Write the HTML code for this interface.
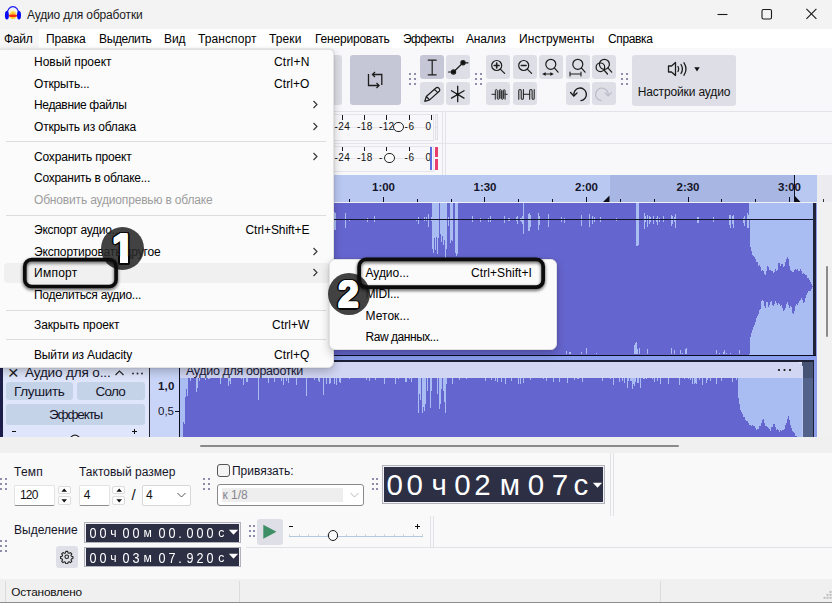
<!DOCTYPE html>
<html lang="ru"><head><meta charset="utf-8"><title>Аудио для обработки</title>
<style>
html,body{margin:0;padding:0}
body{width:832px;height:603px;overflow:hidden;position:relative;background:#f0f0f0;font-family:"Liberation Sans",sans-serif;}
.abs{position:absolute;display:block}
.t{position:absolute;white-space:nowrap;display:block}
.menu{background:#fbfbfb;border:1px solid #e2e2e2;box-sizing:border-box;box-shadow:0 4px 10px rgba(0,0,0,.22),0 0 2px rgba(0,0,0,.15)}
.numo{color:#0a0a0a;font-weight:bold;text-shadow:2.50px 0.00px 0 #0a0a0a,2.31px 0.96px 0 #0a0a0a,1.77px 1.77px 0 #0a0a0a,0.96px 2.31px 0 #0a0a0a,0.00px 2.50px 0 #0a0a0a,-0.96px 2.31px 0 #0a0a0a,-1.77px 1.77px 0 #0a0a0a,-2.31px 0.96px 0 #0a0a0a,-2.50px 0.00px 0 #0a0a0a,-2.31px -0.96px 0 #0a0a0a,-1.77px -1.77px 0 #0a0a0a,-0.96px -2.31px 0 #0a0a0a,-0.00px -2.50px 0 #0a0a0a,0.96px -2.31px 0 #0a0a0a,1.77px -1.77px 0 #0a0a0a,2.31px -0.96px 0 #0a0a0a,1.50px 0.00px 0 #0a0a0a,1.21px 0.88px 0 #0a0a0a,0.46px 1.43px 0 #0a0a0a,-0.46px 1.43px 0 #0a0a0a,-1.21px 0.88px 0 #0a0a0a,-1.50px 0.00px 0 #0a0a0a,-1.21px -0.88px 0 #0a0a0a,-0.46px -1.43px 0 #0a0a0a,0.46px -1.43px 0 #0a0a0a,1.21px -0.88px 0 #0a0a0a;}
.num{color:#fff;font-weight:bold;text-shadow:0.90px 0.00px 0 #fff,0.73px 0.53px 0 #fff,0.28px 0.86px 0 #fff,-0.28px 0.86px 0 #fff,-0.73px 0.53px 0 #fff,-0.90px 0.00px 0 #fff,-0.73px -0.53px 0 #fff,-0.28px -0.86px 0 #fff,0.28px -0.86px 0 #fff,0.73px -0.53px 0 #fff;}
</style></head><body>
<div class="abs" style="left:0px;top:0px;width:832px;height:29px;background:#f3f3f3;"></div>
<svg class="abs" style="left:0px;top:0px" width="26" height="26" viewBox="0 0 26 26">
 <defs><radialGradient id="ag" cx="50%" cy="55%" r="55%"><stop offset="0" stop-color="#ffb020"/><stop offset=".6" stop-color="#ffd23a"/><stop offset="1" stop-color="#fff0a8"/></radialGradient></defs>
 <path d="M7.300 13.500A5.650 6.900 0 0 1 18.600 13.500" fill="none" stroke="#1c1cf2" stroke-width="1.200"/>
 <ellipse cx="6.900" cy="15.200" rx="2" ry="4.300" fill="#0a0af5"/>
 <ellipse cx="19" cy="15.200" rx="2" ry="4.300" fill="#0a0af5"/>
 <ellipse cx="12.950" cy="14.900" rx="3.800" ry="4.400" fill="url(#ag)"/>
 <ellipse cx="12.950" cy="15.700" rx="4.300" ry="1.250" fill="#ff2a12"/>
</svg>
<span class="t" style="left:27.00px;top:6.50px;line-height:16px;font-size:12px;color:#1b1b1b;letter-spacing:-0.165px;">Аудио для обработки</span>
<svg class="abs" style="left:700px;top:0" width="132" height="29" viewBox="0 0 132 29" fill="none" stroke="#1a1a1a" stroke-width="1.100">
 <path d="M17.500 14.500h10"/>
 <rect x="62" y="9.500" width="9.500" height="9.500" rx="1.500"/>
 <path d="M106.400 8.900l10 10M116.400 8.900l-10 10"/>
</svg>
<div class="abs" style="left:0px;top:29px;width:832px;height:18.5px;background:#ffffff;"></div>
<div class="abs" style="left:0px;top:29px;width:38.5px;height:18.5px;background:#f6f6f6;"></div>
<span class="t" style="left:4.00px;top:30.50px;line-height:16px;font-size:12px;color:#000;letter-spacing:-0.250px;">Файл</span>
<span class="t" style="left:46.00px;top:30.50px;line-height:16px;font-size:12px;color:#000;letter-spacing:-0.172px;">Правка</span>
<span class="t" style="left:99.00px;top:30.50px;line-height:16px;font-size:12px;color:#000;letter-spacing:-0.357px;">Выделить</span>
<span class="t" style="left:164.00px;top:30.50px;line-height:16px;font-size:12px;color:#000;letter-spacing:-0.070px;">Вид</span>
<span class="t" style="left:198.00px;top:30.50px;line-height:16px;font-size:12px;color:#000;letter-spacing:0.088px;">Транспорт</span>
<span class="t" style="left:269.00px;top:30.50px;line-height:16px;font-size:12px;color:#000;letter-spacing:0.109px;">Треки</span>
<span class="t" style="left:315.00px;top:30.50px;line-height:16px;font-size:12px;color:#000;letter-spacing:-0.191px;">Генерировать</span>
<span class="t" style="left:403.00px;top:30.50px;line-height:16px;font-size:12px;color:#000;letter-spacing:-0.579px;">Эффекты</span>
<span class="t" style="left:466.00px;top:30.50px;line-height:16px;font-size:12px;color:#000;letter-spacing:-0.168px;">Анализ</span>
<span class="t" style="left:519.00px;top:30.50px;line-height:16px;font-size:12px;color:#000;letter-spacing:0.062px;">Инструменты</span>
<span class="t" style="left:608.00px;top:30.50px;line-height:16px;font-size:12px;color:#000;letter-spacing:-0.368px;">Справка</span>
<div class="abs" style="left:0px;top:47.5px;width:832px;height:64px;background:#f8f8fa;"></div>
<div class="abs" style="left:0px;top:111px;width:832px;height:1px;background:#e3e3e8;"></div>
<div class="abs" style="left:334px;top:55px;width:8px;height:50px;background:#dddde6;border-radius:0 3px 3px 0;"></div>
<div class="abs" style="left:350px;top:55px;width:50.5px;height:50px;background:#c6c7d6;border-radius:3px;"></div>
<svg class="abs" style="left:366px;top:70px" width="20" height="20" viewBox="0 0 20 20" fill="none" stroke="#1c1c1c" stroke-width="1.300">
 <path d="M2.500 4V15.500H13"/><path d="M10.500 13L13 15.500L10.500 18"/>
 <path d="M6.500 4.500H15.800V15"/><path d="M9 2L6.500 4.500L9 7"/>
</svg>
<div class="abs" style="left:408.6px;top:73.2px;width:2px;height:2px;background:#8e8eac;box-shadow:0 0 1px rgba(255,255,255,.9);"></div><div class="abs" style="left:413.5px;top:73.2px;width:2px;height:2px;background:#8e8eac;box-shadow:0 0 1px rgba(255,255,255,.9);"></div><div class="abs" style="left:408.6px;top:78.10000000000001px;width:2px;height:2px;background:#8e8eac;box-shadow:0 0 1px rgba(255,255,255,.9);"></div><div class="abs" style="left:413.5px;top:78.10000000000001px;width:2px;height:2px;background:#8e8eac;box-shadow:0 0 1px rgba(255,255,255,.9);"></div><div class="abs" style="left:408.6px;top:83.0px;width:2px;height:2px;background:#8e8eac;box-shadow:0 0 1px rgba(255,255,255,.9);"></div><div class="abs" style="left:413.5px;top:83.0px;width:2px;height:2px;background:#8e8eac;box-shadow:0 0 1px rgba(255,255,255,.9);"></div>
<div class="abs" style="left:475.1px;top:73.2px;width:2px;height:2px;background:#8e8eac;box-shadow:0 0 1px rgba(255,255,255,.9);"></div><div class="abs" style="left:480.0px;top:73.2px;width:2px;height:2px;background:#8e8eac;box-shadow:0 0 1px rgba(255,255,255,.9);"></div><div class="abs" style="left:475.1px;top:78.10000000000001px;width:2px;height:2px;background:#8e8eac;box-shadow:0 0 1px rgba(255,255,255,.9);"></div><div class="abs" style="left:480.0px;top:78.10000000000001px;width:2px;height:2px;background:#8e8eac;box-shadow:0 0 1px rgba(255,255,255,.9);"></div><div class="abs" style="left:475.1px;top:83.0px;width:2px;height:2px;background:#8e8eac;box-shadow:0 0 1px rgba(255,255,255,.9);"></div><div class="abs" style="left:480.0px;top:83.0px;width:2px;height:2px;background:#8e8eac;box-shadow:0 0 1px rgba(255,255,255,.9);"></div>
<div class="abs" style="left:621.1px;top:73.2px;width:2px;height:2px;background:#8e8eac;box-shadow:0 0 1px rgba(255,255,255,.9);"></div><div class="abs" style="left:626.0px;top:73.2px;width:2px;height:2px;background:#8e8eac;box-shadow:0 0 1px rgba(255,255,255,.9);"></div><div class="abs" style="left:621.1px;top:78.10000000000001px;width:2px;height:2px;background:#8e8eac;box-shadow:0 0 1px rgba(255,255,255,.9);"></div><div class="abs" style="left:626.0px;top:78.10000000000001px;width:2px;height:2px;background:#8e8eac;box-shadow:0 0 1px rgba(255,255,255,.9);"></div><div class="abs" style="left:621.1px;top:83.0px;width:2px;height:2px;background:#8e8eac;box-shadow:0 0 1px rgba(255,255,255,.9);"></div><div class="abs" style="left:626.0px;top:83.0px;width:2px;height:2px;background:#8e8eac;box-shadow:0 0 1px rgba(255,255,255,.9);"></div>
<div class="abs" style="left:419.5px;top:55px;width:24px;height:23.5px;background:#c6c7d6;border-radius:3px;"></div>
<div class="abs" style="left:446px;top:55px;width:24px;height:23.5px;background:#dedee7;border-radius:3px;"></div>
<div class="abs" style="left:419.5px;top:81.5px;width:24px;height:23.5px;background:#dedee7;border-radius:3px;"></div>
<div class="abs" style="left:446px;top:81.5px;width:24px;height:23.5px;background:#dedee7;border-radius:3px;"></div>
<div class="abs" style="left:486px;top:55px;width:24px;height:23.5px;background:#dedee7;border-radius:3px;"></div>
<div class="abs" style="left:512.5px;top:55px;width:24px;height:23.5px;background:#dedee7;border-radius:3px;"></div>
<div class="abs" style="left:539px;top:55px;width:24px;height:23.5px;background:#dedee7;border-radius:3px;"></div>
<div class="abs" style="left:565.5px;top:55px;width:24px;height:23.5px;background:#dedee7;border-radius:3px;"></div>
<div class="abs" style="left:592px;top:55px;width:24px;height:23.5px;background:#dedee7;border-radius:3px;"></div>
<div class="abs" style="left:486px;top:81.5px;width:24px;height:23.5px;background:#dedee7;border-radius:3px;"></div>
<div class="abs" style="left:512.5px;top:81.5px;width:24px;height:23.5px;background:#dedee7;border-radius:3px;"></div>
<div class="abs" style="left:565.5px;top:81.5px;width:24px;height:23.5px;background:#dedee7;border-radius:3px;"></div>
<div class="abs" style="left:592px;top:81.5px;width:24px;height:23.5px;background:#dedee7;border-radius:3px;"></div>
<div class="abs" style="left:632px;top:55px;width:104px;height:50.5px;background:#dedee7;border-radius:3px;"></div>
<svg class="abs" style="left:419.5px;top:55px" width="24" height="23.500" viewBox="0 0 24 23.500" fill="none" stroke="#1c1c1c" stroke-width="1.2" stroke-linecap="round" stroke-linejoin="round"><path d="M8.200 5.200h8M8.200 19.800h8M12.200 5.200V19.800"/></svg>
<svg class="abs" style="left:446px;top:55px" width="24" height="23.500" viewBox="0 0 24 23.500" fill="none" stroke="#1c1c1c" stroke-width="1.2" stroke-linecap="round" stroke-linejoin="round"><path d="M2.500 17H7.500L17 7.800H22"/><circle cx="7.500" cy="17" r="2.100" fill="#111"/><circle cx="17" cy="7.800" r="2.100" fill="#111"/></svg>
<svg class="abs" style="left:419.5px;top:81.5px" width="24" height="23.500" viewBox="0 0 24 23.500" fill="none" stroke="#1c1c1c" stroke-width="1.2" stroke-linecap="round" stroke-linejoin="round"><path d="M4.800 19.300l1.500-4.800L15.900 6a1.900 1.900 0 0 1 2.700 0l.6.600a1.900 1.900 0 0 1 0 2.700L9.600 17.900z M14.500 7.400l3.300 3.300M6.300 14.500l3.300 3.400"/></svg>
<svg class="abs" style="left:446px;top:81.5px" width="24" height="23.500" viewBox="0 0 24 23.500" fill="none" stroke="#1c1c1c" stroke-width="1.3" stroke-linecap="round" stroke-linejoin="round"><path d="M11.700 4.200v15.500M5.500 8.700l12.500 7.400M18 8.700l-12.500 7.400"/><circle cx="11.700" cy="12.400" r="1.300" fill="#111" stroke="none"/></svg>
<svg class="abs" style="left:486px;top:55px" width="24" height="23.500" viewBox="0 0 24 23.500" fill="none" stroke="#1c1c1c" stroke-width="1.2" stroke-linecap="round" stroke-linejoin="round"><circle cx="10.700" cy="10.500" r="5"/><path d="M14.300 14.100l4.300 4.300"/><path d="M8.300 10.500h4.800M10.700 8.100v4.800" stroke-width="1.600"/></svg>
<svg class="abs" style="left:512.5px;top:55px" width="24" height="23.500" viewBox="0 0 24 23.500" fill="none" stroke="#1c1c1c" stroke-width="1.2" stroke-linecap="round" stroke-linejoin="round"><circle cx="10.700" cy="10.500" r="5"/><path d="M14.300 14.100l4.300 4.300"/><path d="M8.300 10.500h4.800" stroke-width="1.600"/></svg>
<svg class="abs" style="left:539px;top:55px" width="24" height="23.500" viewBox="0 0 24 23.500" fill="none" stroke="#1c1c1c" stroke-width="1.2" stroke-linecap="round" stroke-linejoin="round"><circle cx="11.800" cy="9.300" r="5"/><path d="M15.300 12.900l3.800 4.300"/><path d="M4 19h10" stroke-width="1"/><path d="M4 19l2.600-1.900v3.800zM14 19l-2.600-1.900v3.800z" fill="#111" stroke="none"/></svg>
<svg class="abs" style="left:565.5px;top:55px" width="24" height="23.500" viewBox="0 0 24 23.500" fill="none" stroke="#1c1c1c" stroke-width="1.2" stroke-linecap="round" stroke-linejoin="round"><circle cx="11.800" cy="9.300" r="5"/><path d="M15.300 12.900l3.800 4.300"/><path d="M4 19h11M4 17v4M15 17v4" stroke-width="1.100"/></svg>
<svg class="abs" style="left:592px;top:55px" width="24" height="23.500" viewBox="0 0 24 23.500" fill="none" stroke="#1c1c1c" stroke-width="1.2" stroke-linecap="round" stroke-linejoin="round"><circle cx="12.400" cy="9.300" r="5"/><circle cx="8.400" cy="12.300" r="4.300"/><path d="M15.900 12.900l3.800 4.300M12 15l3.500 4"/></svg>
<svg class="abs" style="left:486px;top:81.5px" width="24" height="23.500" viewBox="0 0 24 23.500" fill="none" stroke="#1c1c1c" stroke-width="0.95" stroke-linecap="round" stroke-linejoin="round"><rect x="12.500" y="8.500" width="6" height="8" fill="#8a8a92" stroke="none"/><path d="M5.900 12.300h3.400M19.100 12.300h2.100"/><path d="M9.300 17.300V8.600a1 1 0 0 1 2 0V16.300a1 1 0 0 0 2 0V8.600a1 1 0 0 1 2 0V16.300a1 1 0 0 0 2 0V8.600a.9 .9 0 0 1 1.800 0V17.300"/></svg>
<svg class="abs" style="left:512.5px;top:81.5px" width="24" height="23.500" viewBox="0 0 24 23.500" fill="none" stroke="#1c1c1c" stroke-width="1.05" stroke-linecap="round" stroke-linejoin="round"><path d="M10.400 12.300h6.300"/><path d="M5.800 17.300V8.700a1.200 1.200 0 0 1 2.400 0V16.200a1.100 1.100 0 0 0 2.200 0V7.600M16.700 17.300V8.700a1.200 1.200 0 0 1 2.400 0V16.200a1.050 1.050 0 0 0 2.100 0V7.600"/></svg>
<svg class="abs" style="left:565.5px;top:81.5px" width="24" height="23.500" viewBox="0 0 24 23.500" fill="none" stroke="#1c1c1c" stroke-width="1.4" stroke-linecap="round" stroke-linejoin="round"><path d="M7.900 13.600A6.300 6.300 0 1 1 15 18.600"/><path d="M4.600 10.600l3.200 3.300 3.200-3"/></svg>
<svg class="abs" style="left:592px;top:81.5px" width="24" height="23.500" viewBox="0 0 24 23.500" fill="none" stroke="#b6b9c4" stroke-width="1.1" stroke-linecap="round" stroke-linejoin="round"><path d="M16.100 13.600A6.300 6.300 0 1 0 9 18.600"/><path d="M19.400 10.600l-3.200 3.300-3.200-3"/></svg>
<svg class="abs" style="left:664px;top:58px" width="40" height="22" viewBox="0 0 40 22" fill="none" stroke="#1c1c1c" stroke-width="1.300" stroke-linejoin="round" stroke-linecap="round">
 <path d="M4.500 8h3l4-3.500v13l-4-3.500h-3z"/><path d="M14 8.500q1.500 2.500 0 5M17 6.500q2.800 4.500 0 9M20 4.800q4 6.200 0 12.400" />
 <path d="M30.300 9.200h5.400l-2.700 4.200z" fill="#111" stroke="none"/>
</svg>
<span class="t" style="left:637.70px;top:83.50px;line-height:16px;font-size:12px;color:#111;letter-spacing:-0.139px;">Настройки аудио</span>
<div class="abs" style="left:0px;top:112px;width:832px;height:63px;background:#f8f8fa;"></div>
<div class="abs" style="left:334px;top:142.5px;width:498px;height:1px;background:#e4e4ea;"></div>
<div class="abs" style="left:442px;top:112px;width:1px;height:63px;background:#e2e2e8;"></div>
<div class="abs" style="left:445px;top:112px;width:1px;height:63px;background:#e2e2e8;"></div>
<div class="abs" style="left:334px;top:114px;width:100px;height:1px;background:#e4e4ea;"></div>
<div class="abs" style="left:334px;top:139.7px;width:100px;height:1px;background:#e4e4ea;"></div>
<div class="abs" style="left:433.3px;top:114px;width:1px;height:25.69999999999999px;background:#e4e4ea;"></div>
<div class="abs" style="left:334px;top:126.64999999999999px;width:96px;height:1px;background:#e6e6ec;"></div>
<div class="abs" style="left:342px;top:115px;width:1px;height:4.6px;background:#1a1a1a;"></div>
<div class="abs" style="left:364px;top:115px;width:1px;height:4.6px;background:#1a1a1a;"></div>
<div class="abs" style="left:386px;top:115px;width:1px;height:4.6px;background:#1a1a1a;"></div>
<div class="abs" style="left:409px;top:115px;width:1px;height:4.6px;background:#1a1a1a;"></div>
<div class="abs" style="left:431px;top:115px;width:1px;height:4.6px;background:#1a1a1a;"></div>
<span class="t" style="left:334.60px;top:120.05px;line-height:13px;font-size:10px;color:#111;letter-spacing:0.416px;">-24</span>
<span class="t" style="left:357.00px;top:120.05px;line-height:13px;font-size:10px;color:#111;letter-spacing:0.383px;">-18</span>
<span class="t" style="left:379.00px;top:120.05px;line-height:13px;font-size:10px;color:#111;letter-spacing:0.349px;">-12</span>
<span class="t" style="left:404.50px;top:120.05px;line-height:13px;font-size:10px;color:#111;letter-spacing:0.555px;">-6</span>
<span class="t" style="left:425.50px;top:120.05px;line-height:13px;font-size:10px;color:#111;letter-spacing:0.439px;">0</span>
<div class="abs" style="left:393.2px;top:121.64999999999999px;width:8.400px;height:8.400px;border:1.300px solid #222;border-radius:50%;background:#fafafa"></div>
<div class="abs" style="left:334px;top:145.5px;width:100px;height:1px;background:#e4e4ea;"></div>
<div class="abs" style="left:334px;top:170.5px;width:100px;height:1px;background:#e4e4ea;"></div>
<div class="abs" style="left:433.3px;top:145.5px;width:1px;height:25.0px;background:#e4e4ea;"></div>
<div class="abs" style="left:334px;top:157.8px;width:96px;height:1px;background:#e6e6ec;"></div>
<div class="abs" style="left:342px;top:146.5px;width:1px;height:4.6px;background:#1a1a1a;"></div>
<div class="abs" style="left:364px;top:146.5px;width:1px;height:4.6px;background:#1a1a1a;"></div>
<div class="abs" style="left:386px;top:146.5px;width:1px;height:4.6px;background:#1a1a1a;"></div>
<div class="abs" style="left:409px;top:146.5px;width:1px;height:4.6px;background:#1a1a1a;"></div>
<div class="abs" style="left:431px;top:146.5px;width:1px;height:4.6px;background:#1a1a1a;"></div>
<span class="t" style="left:334.60px;top:151.20px;line-height:13px;font-size:10px;color:#111;letter-spacing:0.416px;">-24</span>
<span class="t" style="left:357.00px;top:151.20px;line-height:13px;font-size:10px;color:#111;letter-spacing:0.383px;">-18</span>
<span class="t" style="left:379.00px;top:151.20px;line-height:13px;font-size:10px;color:#111;letter-spacing:1.170px;">-</span>
<span class="t" style="left:404.50px;top:151.20px;line-height:13px;font-size:10px;color:#111;letter-spacing:0.555px;">-6</span>
<span class="t" style="left:425.50px;top:151.20px;line-height:13px;font-size:10px;color:#111;letter-spacing:0.439px;">0</span>
<div class="abs" style="left:384.3px;top:152.8px;width:8.400px;height:8.400px;border:1.300px solid #222;border-radius:50%;background:#fafafa"></div>
<div class="abs" style="left:434.6px;top:114.3px;width:3.8px;height:25.6px;background:#f4f4f7;border:1px solid #e0e0e6;box-sizing:border-box;"></div>
<div class="abs" style="left:434.6px;top:126.8px;width:3.8px;height:1px;background:#e0e0e6;"></div>
<div class="abs" style="left:430.4px;top:146.7px;width:1.9px;height:23.3px;background:#5a6ee0;"></div>
<div class="abs" style="left:434.9px;top:146.7px;width:3.3px;height:10.6px;background:#e8406a;"></div>
<div class="abs" style="left:434.9px;top:158.8px;width:3.3px;height:11.2px;background:#e8406a;"></div>
<div class="abs" style="left:0px;top:174.5px;width:334px;height:28.5px;background:#e9e9ee;"></div>
<div class="abs" style="left:334px;top:174.5px;width:483px;height:28.5px;background:#b9c8f1;"></div>
<div class="abs" style="left:609.5px;top:174.5px;width:185px;height:28.5px;background:#a7b6e2;"></div>
<div class="abs" style="left:817px;top:174.5px;width:15px;height:28.5px;background:#ebebf0;"></div>
<div class="abs" style="left:334px;top:201.7px;width:483px;height:1.4px;background:#101020;"></div>
<div class="abs" style="left:349px;top:198.7px;width:1px;height:3.5px;background:#101020;"></div>
<div class="abs" style="left:383px;top:196.7px;width:1px;height:5.5px;background:#101020;"></div>
<div class="abs" style="left:417px;top:198.7px;width:1px;height:3.5px;background:#101020;"></div>
<div class="abs" style="left:451px;top:198.7px;width:1px;height:3.5px;background:#101020;"></div>
<div class="abs" style="left:484px;top:196.7px;width:1px;height:5.5px;background:#101020;"></div>
<div class="abs" style="left:518px;top:198.7px;width:1px;height:3.5px;background:#101020;"></div>
<div class="abs" style="left:552px;top:198.7px;width:1px;height:3.5px;background:#101020;"></div>
<div class="abs" style="left:586px;top:196.7px;width:1px;height:5.5px;background:#101020;"></div>
<div class="abs" style="left:620px;top:198.7px;width:1px;height:3.5px;background:#101020;"></div>
<div class="abs" style="left:654px;top:198.7px;width:1px;height:3.5px;background:#101020;"></div>
<div class="abs" style="left:688px;top:196.7px;width:1px;height:5.5px;background:#101020;"></div>
<div class="abs" style="left:721px;top:198.7px;width:1px;height:3.5px;background:#101020;"></div>
<div class="abs" style="left:755px;top:198.7px;width:1px;height:3.5px;background:#101020;"></div>
<div class="abs" style="left:789px;top:196.7px;width:1px;height:5.5px;background:#101020;"></div>
<span class="t" style="left:372.00px;top:180.00px;line-height:15px;font-size:11.5px;color:#15152a;font-weight:bold;letter-spacing:-0.004px;">1:00</span>
<span class="t" style="left:473.50px;top:180.00px;line-height:15px;font-size:11.5px;color:#15152a;font-weight:bold;letter-spacing:-0.004px;">1:30</span>
<span class="t" style="left:575.00px;top:180.00px;line-height:15px;font-size:11.5px;color:#15152a;font-weight:bold;letter-spacing:-0.004px;">2:00</span>
<span class="t" style="left:676.50px;top:180.00px;line-height:15px;font-size:11.5px;color:#15152a;font-weight:bold;letter-spacing:-0.004px;">2:30</span>
<span class="t" style="left:778.00px;top:180.00px;line-height:15px;font-size:11.5px;color:#15152a;font-weight:bold;letter-spacing:-0.004px;">3:00</span>
<div class="abs" style="left:794px;top:175px;width:1.2px;height:27px;background:#101020;"></div>
<svg class="abs" style="left:600px;top:194px" width="210" height="8" viewBox="0 0 210 8"><path d="M9.500 1.500v6.500h-6.500zM194.500 1.500v6.500h6z" fill="#0c0c18"/></svg>
<div class="abs" style="left:823.3px;top:199px;width:1px;height:3.5px;background:#333;"></div>
<div class="abs" style="left:0px;top:202px;width:832px;height:235px;background:#f0f0f3;"></div>
<div class="abs" style="left:817px;top:202px;width:15px;height:251px;background:#f1f1f1;"></div>
<div class="abs" style="left:825.5px;top:266px;width:2.2px;height:71px;background:#8b8b8b;border-radius:1px;"></div>

<svg class="abs" style="left:0;top:0" width="832" height="603" viewBox="0 0 832 603" shape-rendering="crispEdges">
 <!-- track1 -->
 <rect x="334" y="203" width="415" height="151.500" fill="#6565cf"/>
 <rect x="749" y="203" width="63.500" height="151.500" fill="#a9bdf2"/>
 <polygon points="749,219.0 750,219.0 750,247.2 751,247.2 751,251.2 752,251.2 752,254.8 753,254.8 753,256.2 754,256.2 754,257.3 755,257.3 755,258.6 756,258.6 756,261.8 757,261.8 757,262.2 758,262.2 758,265.6 759,265.6 759,265.4 760,265.4 760,266.8 761,266.8 761,271.1 762,271.1 762,270.1 763,270.1 763,270.9 764,270.9 764,273.9 765,273.9 765,274.5 766,274.5 766,271.2 767,271.2 767,266.4 768,266.4 768,267.3 769,267.3 769,270.0 770,270.0 770,269.8 771,269.8 771,270.6 772,270.6 772,271.4 773,271.4 773,273.1 774,273.1 774,271.9 775,271.9 775,268.6 776,268.6 776,270.7 777,270.7 777,269.7 778,269.7 778,262.9 779,262.9 779,263.0 780,263.0 780,265.5 781,265.5 781,263.5 782,263.5 782,263.9 783,263.9 783,266.5 784,266.5 784,265.8 785,265.8 785,261.7 786,261.7 786,258.9 787,258.9 787,257.0 788,257.0 788,259.0 789,259.0 789,266.2 790,266.2 790,269.9 791,269.9 791,271.2 792,271.2 792,272.3 793,272.3 793,272.4 794,272.4 794,270.3 795,270.3 795,269.4 796,269.4 796,270.0 797,270.0 797,269.2 798,269.2 798,270.7 799,270.7 799,270.7 800,270.7 800,268.9 801,268.9 801,271.1 802,271.1 802,273.6 803,273.6 803,273.0 804,273.0 804,273.9 805,273.9 805,275.0 806,275.0 806,275.4 807,275.4 807,277.5 808,277.5 808,278.1 809,278.1 809,279.8 810,279.8 810,282.3 811,282.3 811,283.9 812,283.9 812,285.6 813,285.6 813,287.4 812,287.4 812,289.1 811,289.1 811,290.5 810,290.5 810,290.7 809,290.7 809,291.0 808,291.0 808,292.5 807,292.5 807,294.7 806,294.7 806,297.9 805,297.9 805,302.1 804,302.1 804,303.3 803,303.3 803,300.0 802,300.0 802,298.2 801,298.2 801,299.6 800,299.6 800,300.6 799,300.6 799,303.0 798,303.0 798,305.2 797,305.2 797,304.4 796,304.4 796,306.2 795,306.2 795,311.3 794,311.3 794,314.2 793,314.2 793,312.8 792,312.8 792,307.4 791,307.4 791,306.2 790,306.2 790,307.7 789,307.7 789,304.8 788,304.8 788,302.4 787,302.4 787,303.9 786,303.9 786,307.5 785,307.5 785,310.1 784,310.1 784,311.4 783,311.4 783,308.0 782,308.0 782,304.8 781,304.8 781,306.3 780,306.3 780,304.2 779,304.2 779,303.2 778,303.2 778,305.1 777,305.1 777,302.6 776,302.6 776,301.0 775,301.0 775,303.9 774,303.9 774,306.4 773,306.4 773,304.5 772,304.5 772,301.3 771,301.3 771,301.6 770,301.6 770,305.4 769,305.4 769,306.9 768,306.9 768,302.0 767,302.0 767,302.2 766,302.2 766,307.9 765,307.9 765,306.2 764,306.2 764,301.2 763,301.2 763,299.7 762,299.7 762,300.9 761,300.9 761,308.8 760,308.8 760,310.1 759,310.1 759,313.5 758,313.5 758,316.1 757,316.1 757,318.2 756,318.2 756,322.0 755,322.0 755,325.1 754,325.1 754,327.4 753,327.4 753,329.7 752,329.7 752,332.5 751,332.5 751,336.5 750,336.5 750,354.0 749,354.0" fill="#6565cf"/>
 
 <g fill="#a9bdf2"><rect x="334.0" y="212.3" width="1" height="7.2"/><rect x="334.0" y="219.5" width="1" height="10.9"/><rect x="335.0" y="213.2" width="1" height="6.3"/><rect x="335.0" y="219.5" width="1" height="10.8"/><rect x="345.0" y="213.1" width="1" height="6.4"/><rect x="345.0" y="219.5" width="1" height="8.9"/><rect x="349.0" y="218.5" width="1" height="1.0"/><rect x="349.0" y="219.5" width="1" height="1.8"/><rect x="367.0" y="218.0" width="1" height="1.5"/><rect x="367.0" y="219.5" width="1" height="2.9"/><rect x="374.0" y="216.1" width="1" height="3.4"/><rect x="374.0" y="219.5" width="1" height="2.6"/><rect x="416.0" y="218.7" width="1" height="0.8"/><rect x="416.0" y="219.5" width="1" height="1.2"/><rect x="418.0" y="216.6" width="1" height="2.9"/><rect x="418.0" y="219.5" width="1" height="4.4"/><rect x="424.0" y="216.5" width="1" height="3.0"/><rect x="424.0" y="219.5" width="1" height="1.5"/><rect x="426.0" y="216.9" width="1" height="2.6"/><rect x="426.0" y="219.5" width="1" height="1.7"/><rect x="428.0" y="213.9" width="1" height="5.6"/><rect x="428.0" y="219.5" width="1" height="7.5"/><rect x="431.0" y="216.6" width="1" height="2.9"/><rect x="431.0" y="219.5" width="1" height="1.1"/><rect x="432.0" y="203.0" width="1" height="16.5"/><rect x="432.0" y="219.5" width="1" height="29.9"/><rect x="433.0" y="203.0" width="1" height="16.5"/><rect x="433.0" y="219.5" width="1" height="33.8"/><rect x="434.0" y="203.0" width="1" height="16.5"/><rect x="434.0" y="219.5" width="1" height="18.7"/><rect x="435.0" y="203.0" width="1" height="16.5"/><rect x="435.0" y="219.5" width="1" height="30.4"/><rect x="436.0" y="203.0" width="1" height="16.5"/><rect x="436.0" y="219.5" width="1" height="17.3"/><rect x="437.0" y="203.0" width="1" height="16.5"/><rect x="437.0" y="219.5" width="1" height="34.8"/><rect x="438.0" y="203.0" width="1" height="16.5"/><rect x="438.0" y="219.5" width="1" height="18.4"/><rect x="440.0" y="203.0" width="1" height="16.5"/><rect x="440.0" y="219.5" width="1" height="14.1"/><rect x="441.0" y="203.0" width="1" height="16.5"/><rect x="441.0" y="219.5" width="1" height="22.4"/><rect x="442.0" y="203.0" width="1" height="16.5"/><rect x="442.0" y="219.5" width="1" height="16.3"/><rect x="443.0" y="203.0" width="1" height="16.5"/><rect x="443.0" y="219.5" width="1" height="25.9"/><rect x="444.0" y="203.0" width="1" height="16.5"/><rect x="444.0" y="219.5" width="1" height="20.3"/><rect x="445.0" y="203.0" width="1" height="16.5"/><rect x="445.0" y="219.5" width="1" height="39.3"/><rect x="446.0" y="203.0" width="1" height="16.5"/><rect x="446.0" y="219.5" width="1" height="29.5"/><rect x="448.0" y="216.7" width="1" height="2.8"/><rect x="448.0" y="219.5" width="1" height="6.1"/><rect x="450.0" y="203.0" width="1" height="16.5"/><rect x="450.0" y="219.5" width="1" height="23.6"/><rect x="451.0" y="203.0" width="1" height="16.5"/><rect x="451.0" y="219.5" width="1" height="20.2"/><rect x="452.0" y="203.0" width="1" height="16.5"/><rect x="452.0" y="219.5" width="1" height="21.2"/><rect x="455.0" y="203.0" width="1" height="16.5"/><rect x="455.0" y="219.5" width="1" height="33.0"/><rect x="456.0" y="203.0" width="1" height="16.5"/><rect x="456.0" y="219.5" width="1" height="36.0"/><rect x="457.0" y="203.0" width="1" height="16.5"/><rect x="457.0" y="219.5" width="1" height="34.3"/><rect x="472.0" y="216.1" width="1" height="3.4"/><rect x="472.0" y="219.5" width="1" height="2.1"/><rect x="480.0" y="218.4" width="1" height="1.1"/><rect x="480.0" y="219.5" width="1" height="2.3"/><rect x="488.0" y="217.8" width="1" height="1.7"/><rect x="488.0" y="219.5" width="1" height="2.0"/><rect x="490.0" y="216.0" width="1" height="3.5"/><rect x="490.0" y="219.5" width="1" height="2.7"/><rect x="504.0" y="215.9" width="1" height="3.6"/><rect x="504.0" y="219.5" width="1" height="3.3"/><rect x="508.0" y="217.7" width="1" height="1.8"/><rect x="508.0" y="219.5" width="1" height="1.5"/><rect x="509.0" y="217.7" width="1" height="1.8"/><rect x="509.0" y="219.5" width="1" height="1.7"/><rect x="516.0" y="216.8" width="1" height="2.7"/><rect x="516.0" y="219.5" width="1" height="1.0"/><rect x="517.0" y="216.0" width="1" height="3.5"/><rect x="517.0" y="219.5" width="1" height="4.7"/><rect x="520.0" y="217.7" width="1" height="1.8"/><rect x="520.0" y="219.5" width="1" height="1.4"/><rect x="521.0" y="217.8" width="1" height="1.7"/><rect x="521.0" y="219.5" width="1" height="2.5"/><rect x="522.0" y="216.0" width="1" height="3.5"/><rect x="522.0" y="219.5" width="1" height="4.3"/><rect x="523.0" y="203.0" width="1" height="16.5"/><rect x="523.0" y="219.5" width="1" height="14.5"/><rect x="528.0" y="214.1" width="1" height="5.4"/><rect x="528.0" y="219.5" width="1" height="11.1"/><rect x="529.0" y="212.8" width="1" height="6.7"/><rect x="529.0" y="219.5" width="1" height="11.0"/><rect x="530.0" y="215.4" width="1" height="4.1"/><rect x="530.0" y="219.5" width="1" height="7.2"/><rect x="538.0" y="213.1" width="1" height="6.4"/><rect x="538.0" y="219.5" width="1" height="10.2"/><rect x="539.0" y="215.7" width="1" height="3.8"/><rect x="539.0" y="219.5" width="1" height="5.0"/><rect x="548.0" y="214.0" width="1" height="5.5"/><rect x="548.0" y="219.5" width="1" height="7.7"/><rect x="561.0" y="217.2" width="1" height="2.3"/><rect x="561.0" y="219.5" width="1" height="2.0"/><rect x="564.0" y="217.9" width="1" height="1.6"/><rect x="564.0" y="219.5" width="1" height="3.2"/><rect x="581.0" y="215.0" width="1" height="4.5"/><rect x="581.0" y="219.5" width="1" height="6.5"/><rect x="589.0" y="213.7" width="1" height="5.8"/><rect x="589.0" y="219.5" width="1" height="7.6"/><rect x="592.0" y="216.0" width="1" height="3.5"/><rect x="592.0" y="219.5" width="1" height="4.9"/><rect x="594.0" y="216.9" width="1" height="2.6"/><rect x="594.0" y="219.5" width="1" height="2.9"/><rect x="600.0" y="217.4" width="1" height="2.1"/><rect x="600.0" y="219.5" width="1" height="2.3"/><rect x="616.0" y="218.4" width="1" height="1.1"/><rect x="616.0" y="219.5" width="1" height="1.2"/><rect x="636.0" y="203.0" width="1" height="16.5"/><rect x="636.0" y="219.5" width="1" height="26.4"/><rect x="637.0" y="203.0" width="1" height="16.5"/><rect x="637.0" y="219.5" width="1" height="26.4"/><rect x="638.0" y="203.0" width="1" height="16.5"/><rect x="638.0" y="219.5" width="1" height="25.3"/><rect x="644.0" y="213.2" width="1" height="6.3"/><rect x="644.0" y="219.5" width="1" height="9.0"/><rect x="645.0" y="216.4" width="1" height="3.1"/><rect x="645.0" y="219.5" width="1" height="2.9"/><rect x="647.0" y="215.1" width="1" height="4.4"/><rect x="647.0" y="219.5" width="1" height="7.4"/><rect x="649.0" y="216.0" width="1" height="3.5"/><rect x="649.0" y="219.5" width="1" height="4.0"/><rect x="650.0" y="216.6" width="1" height="2.9"/><rect x="650.0" y="219.5" width="1" height="2.7"/><rect x="653.0" y="215.5" width="1" height="4.0"/><rect x="653.0" y="219.5" width="1" height="4.7"/><rect x="656.0" y="218.3" width="1" height="1.2"/><rect x="656.0" y="219.5" width="1" height="2.2"/><rect x="657.0" y="215.9" width="1" height="3.6"/><rect x="657.0" y="219.5" width="1" height="5.0"/><rect x="659.0" y="217.8" width="1" height="1.7"/><rect x="659.0" y="219.5" width="1" height="2.7"/><rect x="663.0" y="216.2" width="1" height="3.3"/><rect x="663.0" y="219.5" width="1" height="2.1"/><rect x="671.0" y="214.6" width="1" height="4.9"/><rect x="671.0" y="219.5" width="1" height="6.3"/><rect x="672.0" y="215.7" width="1" height="3.8"/><rect x="672.0" y="219.5" width="1" height="4.3"/><rect x="674.0" y="217.1" width="1" height="2.4"/><rect x="674.0" y="219.5" width="1" height="2.6"/><rect x="675.0" y="213.9" width="1" height="5.6"/><rect x="675.0" y="219.5" width="1" height="8.0"/><rect x="697.0" y="216.9" width="1" height="2.6"/><rect x="697.0" y="219.5" width="1" height="3.1"/><rect x="698.0" y="216.5" width="1" height="3.0"/><rect x="698.0" y="219.5" width="1" height="3.2"/><rect x="713.0" y="216.7" width="1" height="2.8"/><rect x="713.0" y="219.5" width="1" height="2.0"/><rect x="729.0" y="215.2" width="1" height="4.3"/><rect x="729.0" y="219.5" width="1" height="5.4"/><rect x="730.0" y="215.4" width="1" height="4.1"/><rect x="730.0" y="219.5" width="1" height="8.3"/><rect x="732.0" y="215.9" width="1" height="3.6"/><rect x="732.0" y="219.5" width="1" height="4.6"/><rect x="733.0" y="214.6" width="1" height="4.9"/><rect x="733.0" y="219.5" width="1" height="8.5"/><rect x="743.0" y="218.1" width="1" height="1.4"/><rect x="743.0" y="219.5" width="1" height="3.0"/><rect x="744.0" y="215.5" width="1" height="4.0"/><rect x="744.0" y="219.5" width="1" height="6.7"/><rect x="747.0" y="213.1" width="1" height="6.4"/><rect x="747.0" y="219.5" width="1" height="8.9"/><rect x="748.0" y="214.8" width="1" height="4.7"/><rect x="748.0" y="219.5" width="1" height="8.1"/><rect x="566.0" y="351.4" width="1" height="2.6"/><rect x="569.0" y="351.8" width="1" height="2.2"/><rect x="570.0" y="352.0" width="1" height="2.0"/><rect x="581.0" y="351.7" width="1" height="2.3"/><rect x="586.0" y="347.9" width="1" height="6.1"/><rect x="596.0" y="353.0" width="1" height="1.0"/><rect x="634.0" y="344.6" width="1" height="9.4"/><rect x="635.0" y="342.9" width="1" height="11.1"/><rect x="636.0" y="341.6" width="1" height="12.4"/><rect x="637.0" y="348.6" width="1" height="5.4"/><rect x="639.0" y="347.7" width="1" height="6.3"/><rect x="647.0" y="348.7" width="1" height="5.3"/><rect x="671.0" y="348.2" width="1" height="5.8"/><rect x="674.0" y="350.2" width="1" height="3.8"/><rect x="680.0" y="350.0" width="1" height="4.0"/><rect x="682.0" y="352.8" width="1" height="1.2"/><rect x="685.0" y="349.3" width="1" height="4.7"/><rect x="686.0" y="348.4" width="1" height="5.6"/><rect x="716.0" y="349.7" width="1" height="4.3"/><rect x="719.0" y="352.5" width="1" height="1.5"/><rect x="723.0" y="352.0" width="1" height="2.0"/><rect x="724.0" y="350.3" width="1" height="3.7"/><rect x="726.0" y="352.9" width="1" height="1.1"/><rect x="730.0" y="352.8" width="1" height="1.2"/><rect x="739.0" y="349.6" width="1" height="4.4"/></g>
 <rect x="334" y="219" width="478.500" height="1.300" fill="#15152a"/>
 <rect x="812.500" y="203" width="3.700" height="153" fill="#20233a"/>
 <rect x="816.200" y="203" width="1.100" height="234" fill="#8e9fe9"/>
 <!-- between tracks -->
 <rect x="334" y="354.500" width="482" height="1.700" fill="#0c0c1c"/>
 <rect x="334" y="356.200" width="483.300" height="3.600" fill="#8a9eef"/>
 <rect x="814.300" y="356.200" width="3" height="80.800" fill="#8e9fe9"/>
 <rect x="334" y="359.800" width="480.300" height="2.600" fill="#1c2138"/>
 <!-- track2 -->
 <rect x="802" y="362.400" width="10.500" height="15.600" fill="#475373"/>
 <rect x="802" y="378" width="10.500" height="59" fill="#53628a"/>
 <rect x="812.500" y="360" width="1.800" height="77" fill="#1d2035"/>
 <path d="M180 362.400H798.500a4 4 0 0 1 4 4V377.700H180z" fill="#d1d6f3"/>
 <rect x="801.500" y="378" width="1.500" height="59" fill="#bcc8f0"/>
 <rect x="180" y="377.700" width="557" height="59.300" fill="#6565cf"/>
 <rect x="737" y="377.700" width="64.500" height="59.300" fill="#a9bdf2"/>
 <polygon points="737,437.0 737,378.0 738,378.0 738,398.0 739,398.0 739,404.0 740,404.0 740,410.0 741,410.0 741,412.0 742,412.0 742,414.0 743,414.0 743,417.2 744,417.2 744,416.7 745,416.7 745,420.2 746,420.2 746,421.3 747,421.3 747,420.6 748,420.6 748,422.6 749,422.6 749,424.6 750,424.6 750,424.9 751,424.9 751,426.2 752,426.2 752,425.1 753,425.1 753,425.9 754,425.9 754,426.1 755,426.1 755,427.9 756,427.9 756,429.7 757,429.7 757,429.3 758,429.3 758,428.6 759,428.6 759,426.2 760,426.2 760,426.0 761,426.0 761,422.8 762,422.8 762,420.4 763,420.4 763,418.5 764,418.5 764,422.7 765,422.7 765,425.8 766,425.8 766,425.6 767,425.6 767,426.9 768,426.9 768,427.5 769,427.5 769,428.5 770,428.5 770,430.9 771,430.9 771,426.8 772,426.8 772,426.5 773,426.5 773,424.1 774,424.1 774,424.0 775,424.0 775,427.3 776,427.3 776,430.0 777,430.0 777,428.7 778,428.7 778,430.1 779,430.1 779,431.7 780,431.7 780,429.5 781,429.5 781,431.1 782,431.1 782,429.9 783,429.9 783,429.5 784,429.5 784,428.7 785,428.7 785,424.9 786,424.9 786,422.5 787,422.5 787,418.8 788,418.8 788,416.1 789,416.1 789,419.6 790,419.6 790,424.8 791,424.8 791,428.0 792,428.0 792,431.3 793,431.3 793,431.8 794,431.8 794,433.4 795,433.4 795,435.7 796,435.7 796,435.8 797,435.8 797,437.0" fill="#6565cf"/>
 <g fill="#a9bdf2"><rect x="180.0" y="378.0" width="1" height="59.0"/><rect x="181.0" y="378.0" width="1" height="59.0"/><rect x="182.0" y="378.0" width="1" height="59.0"/><rect x="183.0" y="378.0" width="1" height="44.4"/><rect x="184.0" y="378.0" width="1" height="46.4"/><rect x="185.0" y="378.0" width="1" height="19.2"/><rect x="186.0" y="378.0" width="1" height="10.8"/><rect x="187.0" y="378.0" width="1" height="18.2"/><rect x="190.0" y="378.0" width="1" height="3.2"/><rect x="196.0" y="378.0" width="1" height="14.3"/><rect x="197.0" y="378.0" width="1" height="10.4"/><rect x="199.0" y="378.0" width="1" height="3.4"/><rect x="205.0" y="378.0" width="1" height="1.5"/><rect x="208.0" y="378.0" width="1" height="1.3"/><rect x="209.0" y="378.0" width="1" height="1.1"/><rect x="220.0" y="378.0" width="1" height="5.9"/><rect x="228.0" y="378.0" width="1" height="7.7"/><rect x="229.0" y="378.0" width="1" height="2.9"/><rect x="230.0" y="378.0" width="1" height="6.1"/><rect x="241.0" y="378.0" width="1" height="1.1"/><rect x="243.0" y="378.0" width="1" height="7.3"/><rect x="246.0" y="378.0" width="1" height="3.7"/><rect x="247.0" y="378.0" width="1" height="3.8"/><rect x="258.0" y="378.0" width="1" height="21.8"/><rect x="268.0" y="378.0" width="1" height="4.5"/><rect x="274.0" y="378.0" width="1" height="3.9"/><rect x="281.0" y="378.0" width="1" height="2.6"/><rect x="283.0" y="378.0" width="1" height="6.7"/><rect x="286.0" y="378.0" width="1" height="3.1"/><rect x="288.0" y="378.0" width="1" height="5.1"/><rect x="296.0" y="378.0" width="1" height="6.7"/><rect x="306.0" y="378.0" width="1" height="18.0"/><rect x="314.0" y="378.0" width="1" height="1.7"/><rect x="318.0" y="378.0" width="1" height="3.2"/><rect x="319.0" y="378.0" width="1" height="4.0"/><rect x="323.0" y="378.0" width="1" height="17.2"/><rect x="326.0" y="378.0" width="1" height="6.1"/><rect x="329.0" y="378.0" width="1" height="6.4"/><rect x="330.0" y="378.0" width="1" height="5.4"/><rect x="334.0" y="378.0" width="1" height="6.3"/><rect x="336.0" y="378.0" width="1" height="6.8"/><rect x="339.0" y="378.0" width="1" height="3.9"/><rect x="340.0" y="378.0" width="1" height="4.8"/><rect x="349.0" y="378.0" width="1" height="1.2"/><rect x="366.0" y="378.0" width="1" height="2.4"/><rect x="369.0" y="378.0" width="1" height="2.5"/><rect x="375.0" y="378.0" width="1" height="2.1"/><rect x="384.0" y="378.0" width="1" height="5.5"/><rect x="395.0" y="378.0" width="1" height="5.6"/><rect x="398.0" y="378.0" width="1" height="1.0"/><rect x="405.0" y="378.0" width="1" height="3.8"/><rect x="406.0" y="378.0" width="1" height="3.7"/><rect x="409.0" y="378.0" width="1" height="1.1"/><rect x="411.0" y="378.0" width="1" height="4.1"/><rect x="418.0" y="378.0" width="1" height="35.2"/><rect x="419.0" y="378.0" width="1" height="15.6"/><rect x="420.0" y="378.0" width="1" height="21.7"/><rect x="422.0" y="378.0" width="1" height="34.7"/><rect x="423.0" y="378.0" width="1" height="28.9"/><rect x="424.0" y="378.0" width="1" height="32.5"/><rect x="425.0" y="378.0" width="1" height="25.7"/><rect x="427.0" y="378.0" width="1" height="12.9"/><rect x="430.0" y="378.0" width="1" height="30.1"/><rect x="431.0" y="378.0" width="1" height="12.6"/><rect x="437.0" y="378.0" width="1" height="16.4"/><rect x="439.0" y="378.0" width="1" height="31.3"/><rect x="440.0" y="378.0" width="1" height="26.4"/><rect x="441.0" y="378.0" width="1" height="10.5"/><rect x="443.0" y="378.0" width="1" height="12.6"/><rect x="444.0" y="378.0" width="1" height="24.0"/><rect x="445.0" y="378.0" width="1" height="35.1"/><rect x="446.0" y="378.0" width="1" height="6.1"/><rect x="452.0" y="378.0" width="1" height="6.0"/><rect x="459.0" y="378.0" width="1" height="2.3"/><rect x="466.0" y="378.0" width="1" height="1.4"/><rect x="485.0" y="378.0" width="1" height="3.2"/><rect x="491.0" y="378.0" width="1" height="1.7"/><rect x="495.0" y="378.0" width="1" height="3.4"/><rect x="497.0" y="378.0" width="1" height="3.7"/><rect x="501.0" y="378.0" width="1" height="3.5"/><rect x="505.0" y="378.0" width="1" height="6.4"/><rect x="511.0" y="378.0" width="1" height="2.7"/><rect x="518.0" y="378.0" width="1" height="6.0"/><rect x="520.0" y="378.0" width="1" height="5.8"/><rect x="523.0" y="378.0" width="1" height="4.8"/><rect x="530.0" y="378.0" width="1" height="2.0"/><rect x="543.0" y="378.0" width="1" height="1.0"/><rect x="546.0" y="378.0" width="1" height="3.0"/><rect x="553.0" y="378.0" width="1" height="3.9"/><rect x="559.0" y="378.0" width="1" height="4.0"/><rect x="567.0" y="378.0" width="1" height="4.7"/><rect x="574.0" y="378.0" width="1" height="2.4"/><rect x="577.0" y="378.0" width="1" height="1.1"/><rect x="578.0" y="378.0" width="1" height="1.2"/><rect x="582.0" y="378.0" width="1" height="4.3"/><rect x="602.0" y="378.0" width="1" height="3.0"/><rect x="610.0" y="378.0" width="1" height="1.0"/><rect x="613.0" y="378.0" width="1" height="6.9"/><rect x="619.0" y="378.0" width="1" height="3.9"/><rect x="622.0" y="378.0" width="1" height="2.9"/><rect x="624.0" y="378.0" width="1" height="4.6"/><rect x="627.0" y="378.0" width="1" height="9.6"/><rect x="628.0" y="378.0" width="1" height="3.2"/><rect x="630.0" y="378.0" width="1" height="2.9"/><rect x="631.0" y="378.0" width="1" height="2.7"/><rect x="632.0" y="378.0" width="1" height="10.7"/><rect x="633.0" y="378.0" width="1" height="6.0"/><rect x="634.0" y="378.0" width="1" height="8.1"/><rect x="635.0" y="378.0" width="1" height="4.3"/><rect x="637.0" y="378.0" width="1" height="4.6"/><rect x="638.0" y="378.0" width="1" height="5.4"/><rect x="640.0" y="378.0" width="1" height="10.1"/><rect x="643.0" y="378.0" width="1" height="1.2"/><rect x="644.0" y="378.0" width="1" height="1.2"/><rect x="646.0" y="378.0" width="1" height="1.2"/><rect x="652.0" y="378.0" width="1" height="1.1"/><rect x="654.0" y="378.0" width="1" height="3.5"/><rect x="657.0" y="378.0" width="1" height="2.8"/><rect x="660.0" y="378.0" width="1" height="5.6"/><rect x="668.0" y="378.0" width="1" height="6.0"/><rect x="679.0" y="378.0" width="1" height="6.7"/><rect x="684.0" y="378.0" width="1" height="1.2"/><rect x="688.0" y="378.0" width="1" height="1.2"/><rect x="690.0" y="378.0" width="1" height="2.0"/><rect x="692.0" y="378.0" width="1" height="6.1"/><rect x="694.0" y="378.0" width="1" height="6.1"/><rect x="695.0" y="378.0" width="1" height="5.4"/><rect x="696.0" y="378.0" width="1" height="5.5"/><rect x="699.0" y="378.0" width="1" height="2.4"/><rect x="702.0" y="378.0" width="1" height="7.0"/><rect x="706.0" y="378.0" width="1" height="5.3"/><rect x="707.0" y="378.0" width="1" height="1.6"/><rect x="710.0" y="378.0" width="1" height="2.5"/><rect x="716.0" y="378.0" width="1" height="6.0"/><rect x="721.0" y="378.0" width="1" height="3.2"/><rect x="732.0" y="378.0" width="1" height="4.0"/><rect x="736.0" y="378.0" width="1" height="1.5"/></g>
</svg>

<div class="abs" style="left:0px;top:361px;width:2.5px;height:76px;background:#1d1d4a;"></div>
<div class="abs" style="left:2.5px;top:361px;width:146px;height:76px;background:#dfe6fb;"></div>
<div class="abs" style="left:148.5px;top:361px;width:1.5px;height:76px;background:#2a2a35;"></div>
<div class="abs" style="left:150px;top:361px;width:28.5px;height:76px;background:#c9d5f8;"></div>
<div class="abs" style="left:178.5px;top:361px;width:1.7px;height:76px;background:#0d0d20;"></div>
<span class="t" style="left:7.80px;top:360.00px;line-height:25px;font-size:19px;color:#222;">×</span>
<span class="t" style="left:25.00px;top:364.00px;line-height:18px;font-size:13.5px;color:#15152a;letter-spacing:-0.136px;">Аудио для о...</span>
<svg class="abs" style="left:114px;top:368px" width="32" height="10" viewBox="0 0 32 10" fill="none" stroke="#222" stroke-width="1.100"><path d="M1.500 7l4-4 4 4"/><g fill="#222" stroke="none"><circle cx="19" cy="5.500" r=".9"/><circle cx="23.500" cy="5.500" r=".9"/><circle cx="28" cy="5.500" r=".9"/></g></svg>
<div class="abs" style="left:6px;top:382px;width:67px;height:17.5px;background:#c5d3e8;border-radius:3px;"></div>
<div class="abs" style="left:77px;top:382px;width:68px;height:17.5px;background:#c5d3e8;border-radius:3px;"></div>
<div class="abs" style="left:6px;top:403.7px;width:139px;height:21px;background:#c5d3e8;border-radius:3px;"></div>
<span class="t" style="left:14.00px;top:382.50px;line-height:18px;font-size:13.5px;color:#15152a;letter-spacing:-0.324px;">Глушить</span>
<span class="t" style="left:95.50px;top:382.50px;line-height:18px;font-size:13.5px;color:#15152a;letter-spacing:-0.749px;">Соло</span>
<span class="t" style="left:49.00px;top:405.50px;line-height:18px;font-size:13.5px;color:#15152a;letter-spacing:-1.196px;">Эффекты</span>
<div class="abs" style="left:12px;top:431px;width:4px;height:1.2px;background:#111;"></div>
<div class="abs" style="left:132px;top:431px;width:5px;height:1.2px;background:#111;"></div>
<div class="abs" style="left:134px;top:429px;width:1.2px;height:5px;background:#111;"></div>
<svg class="abs" style="left:68px;top:433px" width="14" height="4" viewBox="0 0 14 4"><circle cx="7" cy="7.200" r="5" fill="#f6f6fa" stroke="#222" stroke-width="1.200"/></svg>
<span class="t" style="left:158.00px;top:378.50px;line-height:15px;font-size:11.5px;color:#15152a;font-weight:bold;letter-spacing:0.172px;">1,0</span>
<span class="t" style="left:158.00px;top:403.50px;line-height:15px;font-size:11.5px;color:#15152a;letter-spacing:0.005px;">0,5</span>
<div class="abs" style="left:175px;top:410.5px;width:3.5px;height:1px;background:#111;"></div>
<span class="t" style="left:186.00px;top:363.00px;line-height:16px;font-size:12.5px;color:#20203a;letter-spacing:-0.357px;">Аудио для обработки</span>
<svg class="abs" style="left:776px;top:367px" width="20" height="6" viewBox="0 0 20 6" fill="#111"><circle cx="3" cy="3" r="1.100"/><circle cx="8.500" cy="3" r="1.100"/><circle cx="14" cy="3" r="1.100"/></svg>
<div class="abs" style="left:0px;top:437px;width:832px;height:16px;background:#f0f0f0;"></div>
<div class="abs" style="left:200px;top:444.5px;width:478.5px;height:2px;background:#8a8a8a;border-radius:1px;"></div>
<div class="abs" style="left:0px;top:453px;width:832px;height:63px;background:#f9f9fa;"></div>
<div class="abs" style="left:0px;top:515.5px;width:832px;height:1px;background:#e1e1e7;"></div>
<div class="abs" style="left:610px;top:453px;width:1px;height:63px;background:#e1e1e7;"></div>
<div class="abs" style="left:612.5px;top:453px;width:1px;height:63px;background:#e1e1e7;"></div>
<div class="abs" style="left:0.1px;top:477.9px;width:2px;height:2px;background:#8e8eac;box-shadow:0 0 1px rgba(255,255,255,.9);"></div><div class="abs" style="left:5.0px;top:477.9px;width:2px;height:2px;background:#8e8eac;box-shadow:0 0 1px rgba(255,255,255,.9);"></div><div class="abs" style="left:0.1px;top:482.79999999999995px;width:2px;height:2px;background:#8e8eac;box-shadow:0 0 1px rgba(255,255,255,.9);"></div><div class="abs" style="left:5.0px;top:482.79999999999995px;width:2px;height:2px;background:#8e8eac;box-shadow:0 0 1px rgba(255,255,255,.9);"></div><div class="abs" style="left:0.1px;top:487.7px;width:2px;height:2px;background:#8e8eac;box-shadow:0 0 1px rgba(255,255,255,.9);"></div><div class="abs" style="left:5.0px;top:487.7px;width:2px;height:2px;background:#8e8eac;box-shadow:0 0 1px rgba(255,255,255,.9);"></div>
<div class="abs" style="left:203.2px;top:478.0px;width:2px;height:2px;background:#8e8eac;box-shadow:0 0 1px rgba(255,255,255,.9);"></div><div class="abs" style="left:208.1px;top:478.0px;width:2px;height:2px;background:#8e8eac;box-shadow:0 0 1px rgba(255,255,255,.9);"></div><div class="abs" style="left:203.2px;top:482.9px;width:2px;height:2px;background:#8e8eac;box-shadow:0 0 1px rgba(255,255,255,.9);"></div><div class="abs" style="left:208.1px;top:482.9px;width:2px;height:2px;background:#8e8eac;box-shadow:0 0 1px rgba(255,255,255,.9);"></div><div class="abs" style="left:203.2px;top:487.8px;width:2px;height:2px;background:#8e8eac;box-shadow:0 0 1px rgba(255,255,255,.9);"></div><div class="abs" style="left:208.1px;top:487.8px;width:2px;height:2px;background:#8e8eac;box-shadow:0 0 1px rgba(255,255,255,.9);"></div>
<div class="abs" style="left:371.5px;top:478.0px;width:2px;height:2px;background:#8e8eac;box-shadow:0 0 1px rgba(255,255,255,.9);"></div><div class="abs" style="left:376.4px;top:478.0px;width:2px;height:2px;background:#8e8eac;box-shadow:0 0 1px rgba(255,255,255,.9);"></div><div class="abs" style="left:371.5px;top:482.9px;width:2px;height:2px;background:#8e8eac;box-shadow:0 0 1px rgba(255,255,255,.9);"></div><div class="abs" style="left:376.4px;top:482.9px;width:2px;height:2px;background:#8e8eac;box-shadow:0 0 1px rgba(255,255,255,.9);"></div><div class="abs" style="left:371.5px;top:487.8px;width:2px;height:2px;background:#8e8eac;box-shadow:0 0 1px rgba(255,255,255,.9);"></div><div class="abs" style="left:376.4px;top:487.8px;width:2px;height:2px;background:#8e8eac;box-shadow:0 0 1px rgba(255,255,255,.9);"></div>
<span class="t" style="left:14.00px;top:464.00px;line-height:16px;font-size:12px;color:#15152a;letter-spacing:0.230px;">Темп</span>
<span class="t" style="left:79.00px;top:464.00px;line-height:16px;font-size:12px;color:#15152a;letter-spacing:0.018px;">Тактовый размер</span>
<div class="abs" style="left:14px;top:484.5px;width:40.5px;height:21.5px;background:#fff;border:1px solid #e3e3e3;border-bottom:1px solid #8c8c8c;box-sizing:border-box;border-radius:2px;"></div>
<span class="t" style="left:20.00px;top:486.50px;line-height:16px;font-size:12px;color:#111;letter-spacing:-0.840px;">120</span>
<div class="abs" style="left:79px;top:484.5px;width:30.5px;height:21.5px;background:#fff;border:1px solid #e3e3e3;border-bottom:1px solid #8c8c8c;box-sizing:border-box;border-radius:2px;"></div>
<span class="t" style="left:83.80px;top:486.50px;line-height:16px;font-size:12px;color:#111;">4</span>
<div class="abs" style="left:57.7px;top:485.5px;width:13px;height:8.5px;background:#fdfdfd;border:1px solid #dcdcdc;box-sizing:border-box;border-radius:2px;"></div><div class="abs" style="left:57.7px;top:496.3px;width:13px;height:8.5px;background:#fdfdfd;border:1px solid #dcdcdc;box-sizing:border-box;border-radius:2px;"></div><svg class="abs" style="left:58px;top:485px" width="12.500" height="21" viewBox="0 0 12.500 21" fill="#111"><path d="M3.400 6.800l2.800-3.200 2.800 3.200zM3.400 14.300l2.800 3.200 2.800-3.200z"/></svg>
<div class="abs" style="left:112.2px;top:485.5px;width:13px;height:8.5px;background:#fdfdfd;border:1px solid #dcdcdc;box-sizing:border-box;border-radius:2px;"></div><div class="abs" style="left:112.2px;top:496.3px;width:13px;height:8.5px;background:#fdfdfd;border:1px solid #dcdcdc;box-sizing:border-box;border-radius:2px;"></div><svg class="abs" style="left:112.5px;top:485px" width="12.500" height="21" viewBox="0 0 12.500 21" fill="#111"><path d="M3.400 6.800l2.800-3.200 2.800 3.200zM3.400 14.300l2.800 3.200 2.800-3.200z"/></svg>
<span class="t" style="left:131.50px;top:485.00px;line-height:20px;font-size:15px;color:#111;">/</span>
<div class="abs" style="left:142px;top:484.5px;width:48.5px;height:21.5px;background:#fff;border:1px solid #d8d8d8;box-sizing:border-box;border-radius:2px;"></div>
<span class="t" style="left:146.00px;top:486.50px;line-height:16px;font-size:12px;color:#111;">4</span>
<svg class="abs" style="left:176px;top:491px" width="11" height="8" viewBox="0 0 11 8" fill="none" stroke="#555" stroke-width="1"><path d="M1.500 2l4 4 4-4"/></svg>
<div class="abs" style="left:217px;top:464px;width:12.6px;height:12.6px;background:#f4f4f4;border:1.200px solid #555;box-sizing:border-box;border-radius:3px;"></div>
<span class="t" style="left:232.00px;top:463.00px;line-height:16px;font-size:12px;color:#15152a;letter-spacing:-0.023px;">Привязать:</span>
<div class="abs" style="left:217px;top:484px;width:146.5px;height:22px;background:#fff;border:1.200px solid #8a8a8a;box-sizing:border-box;border-radius:3px;"></div>
<div class="abs" style="left:221.8px;top:487.7px;width:121.5px;height:14px;background:#eeeeee;"></div>
<span class="t" style="left:222.40px;top:487.00px;line-height:16px;font-size:12px;color:#85858c;letter-spacing:0.007px;">к 1/8</span>
<svg class="abs" style="left:349px;top:491px" width="11" height="8" viewBox="0 0 11 8" fill="none" stroke="#bbb" stroke-width="1"><path d="M1.500 2l4 4 4-4"/></svg>
<div class="abs" style="left:382.2px;top:465.4px;width:223.3px;height:38.2px;background:#f1f1f4;border:1px solid #b2b2bc;box-sizing:border-box;"></div>
<div class="abs" style="left:384.3px;top:467.3px;width:219.2px;height:34.5px;background:#2d2f45;"></div>
<span class="t" style="left:386.55px;top:467.00px;line-height:36px;font-size:29.5px;color:#fff;">0</span>
<span class="t" style="left:406.55px;top:467.00px;line-height:36px;font-size:29.5px;color:#fff;">0</span>
<span class="t" style="left:431.57px;top:467.00px;line-height:36px;font-size:29.5px;color:#fff;">ч</span>
<span class="t" style="left:454.30px;top:467.00px;line-height:36px;font-size:29.5px;color:#fff;">0</span>
<span class="t" style="left:474.30px;top:467.00px;line-height:36px;font-size:29.5px;color:#fff;">2</span>
<span class="t" style="left:499.86px;top:467.00px;line-height:36px;font-size:29.5px;color:#fff;">м</span>
<span class="t" style="left:527.65px;top:467.00px;line-height:36px;font-size:29.5px;color:#fff;">0</span>
<span class="t" style="left:551.80px;top:467.00px;line-height:36px;font-size:29.5px;color:#fff;">7</span>
<span class="t" style="left:573.62px;top:467.00px;line-height:36px;font-size:29.5px;color:#fff;">с</span>
<svg class="abs" style="left:592px;top:482px" width="11" height="7" viewBox="0 0 11 7"><path d="M.8 .8h9.400L5.500 5.800z" fill="#fff"/></svg>
<div class="abs" style="left:0px;top:516px;width:832px;height:63px;background:#f9f9fa;"></div>
<div class="abs" style="left:430px;top:516px;width:1px;height:32px;background:#e1e1e7;"></div>
<div class="abs" style="left:432.5px;top:516px;width:1px;height:32px;background:#e1e1e7;"></div>
<div class="abs" style="left:0px;top:578.5px;width:832px;height:1px;background:#dedee3;"></div>
<div class="abs" style="left:0.1px;top:540.3px;width:2px;height:2px;background:#8e8eac;box-shadow:0 0 1px rgba(255,255,255,.9);"></div><div class="abs" style="left:5.0px;top:540.3px;width:2px;height:2px;background:#8e8eac;box-shadow:0 0 1px rgba(255,255,255,.9);"></div><div class="abs" style="left:0.1px;top:545.1999999999999px;width:2px;height:2px;background:#8e8eac;box-shadow:0 0 1px rgba(255,255,255,.9);"></div><div class="abs" style="left:5.0px;top:545.1999999999999px;width:2px;height:2px;background:#8e8eac;box-shadow:0 0 1px rgba(255,255,255,.9);"></div><div class="abs" style="left:0.1px;top:550.0999999999999px;width:2px;height:2px;background:#8e8eac;box-shadow:0 0 1px rgba(255,255,255,.9);"></div><div class="abs" style="left:5.0px;top:550.0999999999999px;width:2px;height:2px;background:#8e8eac;box-shadow:0 0 1px rgba(255,255,255,.9);"></div>
<div class="abs" style="left:248.5px;top:525.3px;width:2px;height:2px;background:#8e8eac;box-shadow:0 0 1px rgba(255,255,255,.9);"></div><div class="abs" style="left:253.4px;top:525.3px;width:2px;height:2px;background:#8e8eac;box-shadow:0 0 1px rgba(255,255,255,.9);"></div><div class="abs" style="left:248.5px;top:530.1999999999999px;width:2px;height:2px;background:#8e8eac;box-shadow:0 0 1px rgba(255,255,255,.9);"></div><div class="abs" style="left:253.4px;top:530.1999999999999px;width:2px;height:2px;background:#8e8eac;box-shadow:0 0 1px rgba(255,255,255,.9);"></div><div class="abs" style="left:248.5px;top:535.0999999999999px;width:2px;height:2px;background:#8e8eac;box-shadow:0 0 1px rgba(255,255,255,.9);"></div><div class="abs" style="left:253.4px;top:535.0999999999999px;width:2px;height:2px;background:#8e8eac;box-shadow:0 0 1px rgba(255,255,255,.9);"></div>
<span class="t" style="left:14.00px;top:522.00px;line-height:16px;font-size:12px;color:#15152a;letter-spacing:0.013px;">Выделение</span>
<div class="abs" style="left:84px;top:522.3px;width:156.5px;height:20.9px;background:#f1f1f4;border:1px solid #b2b2bc;box-sizing:border-box;"></div>
<div class="abs" style="left:86px;top:524.1px;width:152.5px;height:17.5px;background:#2d2f45;"></div>
<span class="t" style="left:89.01px;top:524.30px;line-height:18px;font-size:14px;color:#fff;transform:scaleX(.9);">0</span>
<span class="t" style="left:99.01px;top:524.30px;line-height:18px;font-size:14px;color:#fff;transform:scaleX(.9);">0</span>
<span class="t" style="left:110.10px;top:524.30px;line-height:18px;font-size:13.5px;color:#fff;transform:scaleX(.9);">ч</span>
<span class="t" style="left:122.01px;top:524.30px;line-height:18px;font-size:14px;color:#fff;transform:scaleX(.9);">0</span>
<span class="t" style="left:132.01px;top:524.30px;line-height:18px;font-size:14px;color:#fff;transform:scaleX(.9);">0</span>
<span class="t" style="left:143.44px;top:524.30px;line-height:18px;font-size:13.5px;color:#fff;transform:scaleX(.9);">м</span>
<span class="t" style="left:157.51px;top:524.30px;line-height:18px;font-size:14px;color:#fff;transform:scaleX(.9);">0</span>
<span class="t" style="left:167.71px;top:524.30px;line-height:18px;font-size:14px;color:#fff;transform:scaleX(.9);">0</span>
<span class="t" style="left:178.06px;top:524.30px;line-height:18px;font-size:14px;color:#fff;transform:scaleX(.9);">.</span>
<span class="t" style="left:185.51px;top:524.30px;line-height:18px;font-size:14px;color:#fff;transform:scaleX(.9);">0</span>
<span class="t" style="left:196.01px;top:524.30px;line-height:18px;font-size:14px;color:#fff;transform:scaleX(.9);">0</span>
<span class="t" style="left:206.01px;top:524.30px;line-height:18px;font-size:14px;color:#fff;transform:scaleX(.9);">0</span>
<span class="t" style="left:217.95px;top:524.30px;line-height:18px;font-size:13.5px;color:#fff;transform:scaleX(.9);">с</span>
<svg class="abs" style="left:228px;top:529.0px" width="11" height="7" viewBox="0 0 11 7"><path d="M.8 .8h9.400L5.500 5.800z" fill="#fff"/></svg>
<div class="abs" style="left:84px;top:546.5999999999999px;width:156.5px;height:20.9px;background:#f1f1f4;border:1px solid #b2b2bc;box-sizing:border-box;"></div>
<div class="abs" style="left:86px;top:548.4px;width:152.5px;height:17.5px;background:#2d2f45;"></div>
<span class="t" style="left:89.01px;top:548.60px;line-height:18px;font-size:14px;color:#fff;transform:scaleX(.9);">0</span>
<span class="t" style="left:99.01px;top:548.60px;line-height:18px;font-size:14px;color:#fff;transform:scaleX(.9);">0</span>
<span class="t" style="left:110.10px;top:548.60px;line-height:18px;font-size:13.5px;color:#fff;transform:scaleX(.9);">ч</span>
<span class="t" style="left:122.01px;top:548.60px;line-height:18px;font-size:14px;color:#fff;transform:scaleX(.9);">0</span>
<span class="t" style="left:132.01px;top:548.60px;line-height:18px;font-size:14px;color:#fff;transform:scaleX(.9);">3</span>
<span class="t" style="left:143.44px;top:548.60px;line-height:18px;font-size:13.5px;color:#fff;transform:scaleX(.9);">м</span>
<span class="t" style="left:157.51px;top:548.60px;line-height:18px;font-size:14px;color:#fff;transform:scaleX(.9);">0</span>
<span class="t" style="left:167.71px;top:548.60px;line-height:18px;font-size:14px;color:#fff;transform:scaleX(.9);">7</span>
<span class="t" style="left:178.06px;top:548.60px;line-height:18px;font-size:14px;color:#fff;transform:scaleX(.9);">.</span>
<span class="t" style="left:185.51px;top:548.60px;line-height:18px;font-size:14px;color:#fff;transform:scaleX(.9);">9</span>
<span class="t" style="left:196.01px;top:548.60px;line-height:18px;font-size:14px;color:#fff;transform:scaleX(.9);">2</span>
<span class="t" style="left:206.01px;top:548.60px;line-height:18px;font-size:14px;color:#fff;transform:scaleX(.9);">0</span>
<span class="t" style="left:217.95px;top:548.60px;line-height:18px;font-size:13.5px;color:#fff;transform:scaleX(.9);">с</span>
<svg class="abs" style="left:228px;top:553.3px" width="11" height="7" viewBox="0 0 11 7"><path d="M.8 .8h9.400L5.500 5.800z" fill="#fff"/></svg>
<div class="abs" style="left:56px;top:546px;width:22px;height:21.5px;background:#dfdfe7;border-radius:3px;"></div>
<svg class="abs" style="left:60px;top:550px" width="13.500" height="13.500" viewBox="0 0 24 24" fill="none" stroke="#222" stroke-width="1.900" stroke-linejoin="round"><circle cx="12" cy="12" r="3.200"/><path d="M10.300 2.500h3.400l.6 2.700 1.900.8 2.400-1.500 2.400 2.400-1.500 2.400.8 1.900 2.700.6v3.400l-2.700.6-.8 1.900 1.500 2.400-2.400 2.400-2.400-1.500-1.900.8-.6 2.700h-3.400l-.6-2.700-1.900-.8-2.400 1.500-2.400-2.400 1.500-2.400-.8-1.900-2.700-.6v-3.400l2.700-.6.8-1.900-1.500-2.400 2.400-2.400 2.400 1.500 1.900-.8z"/></svg>
<div class="abs" style="left:257.3px;top:519.3px;width:26px;height:25.5px;background:#dfdfe7;border-radius:3px;"></div>
<svg class="abs" style="left:262px;top:523px" width="16" height="18" viewBox="0 0 16 18"><path d="M1.300 1.800v14L14.500 8.800z" fill="#3f8f66"/></svg>
<div class="abs" style="left:288.8px;top:525.5px;width:3.8px;height:1.3px;background:#111;"></div>
<div class="abs" style="left:415.3px;top:525.5px;width:5px;height:1.3px;background:#111;"></div>
<div class="abs" style="left:417.2px;top:523.6px;width:1.3px;height:5px;background:#111;"></div>
<div class="abs" style="left:288.8px;top:536.3px;width:134px;height:1px;background:#b5c6e2;"></div>
<div class="abs" style="left:289.0px;top:533.8px;width:1px;height:2.5px;background:#d0d8e6;"></div>
<div class="abs" style="left:298.5px;top:533.8px;width:1px;height:2.5px;background:#d0d8e6;"></div>
<div class="abs" style="left:308.0px;top:533.8px;width:1px;height:2.5px;background:#d0d8e6;"></div>
<div class="abs" style="left:317.5px;top:533.8px;width:1px;height:2.5px;background:#d0d8e6;"></div>
<div class="abs" style="left:327.0px;top:533.8px;width:1px;height:2.5px;background:#d0d8e6;"></div>
<div class="abs" style="left:336.5px;top:533.8px;width:1px;height:2.5px;background:#d0d8e6;"></div>
<div class="abs" style="left:346.0px;top:533.8px;width:1px;height:2.5px;background:#d0d8e6;"></div>
<div class="abs" style="left:355.5px;top:533.8px;width:1px;height:2.5px;background:#d0d8e6;"></div>
<div class="abs" style="left:365.0px;top:533.8px;width:1px;height:2.5px;background:#d0d8e6;"></div>
<div class="abs" style="left:374.5px;top:533.8px;width:1px;height:2.5px;background:#d0d8e6;"></div>
<div class="abs" style="left:384.0px;top:533.8px;width:1px;height:2.5px;background:#d0d8e6;"></div>
<div class="abs" style="left:393.5px;top:533.8px;width:1px;height:2.5px;background:#d0d8e6;"></div>
<div class="abs" style="left:403.0px;top:533.8px;width:1px;height:2.5px;background:#d0d8e6;"></div>
<div class="abs" style="left:412.5px;top:533.8px;width:1px;height:2.5px;background:#d0d8e6;"></div>
<div class="abs" style="left:422.0px;top:533.8px;width:1px;height:2.5px;background:#d0d8e6;"></div>
<div class="abs" style="left:246px;top:547.3px;width:586px;height:1px;background:#e1e1e7;"></div>
<div class="abs" style="left:327.500px;top:530.100px;width:8.600px;height:8.600px;border:1.200px solid #1a1a1a;border-radius:50%;background:#fafafa"></div>
<div class="abs" style="left:0px;top:579px;width:832px;height:24px;background:#f0f0f0;"></div>
<div class="abs" style="left:5px;top:581px;width:1px;height:22px;background:#dcdcdc;"></div>
<div class="abs" style="left:238.5px;top:581px;width:1px;height:22px;background:#dcdcdc;"></div>
<div class="abs" style="left:659.5px;top:581px;width:1px;height:22px;background:#dcdcdc;"></div>
<span class="t" style="left:11.30px;top:584.50px;line-height:15px;font-size:11.8px;color:#111;letter-spacing:-0.165px;">Остановлено</span>
<svg class="abs" style="left:820px;top:589px" width="12" height="12" viewBox="0 0 12 12" fill="#bdbdbd"><rect x="9.500" y="1.900" width="2" height="2"/><rect x="6.500" y="4.800" width="2" height="2"/><rect x="9.500" y="4.800" width="2" height="2"/><rect x="3.500" y="7.800" width="2" height="2"/><rect x="6.500" y="7.800" width="2" height="2"/><rect x="9.500" y="7.800" width="2" height="2"/></svg>
<div class="abs" style="left:0px;top:601.5px;width:832px;height:1.5px;background:#8d8d8d;"></div>
<div class="abs menu" style="left:-1px;top:48.500px;width:334.800px;height:319.200px;border-radius:0 4px 6px 0;"></div>
<div class="abs" style="left:4px;top:262.5px;width:326px;height:20.5px;background:#f0f0f0;border-radius:4px;"></div>
<span class="t" style="left:34.00px;top:53.80px;line-height:16px;font-size:12px;color:#000;letter-spacing:-0.023px;">Новый проект</span>
<span class="t" style="left:274.00px;top:53.80px;line-height:16px;font-size:12px;color:#000;letter-spacing:0.194px;">Ctrl+N</span>
<span class="t" style="left:34.00px;top:75.50px;line-height:16px;font-size:12px;color:#000;letter-spacing:-0.163px;">Открыть...</span>
<span class="t" style="left:274.00px;top:75.50px;line-height:16px;font-size:12px;color:#000;letter-spacing:0.083px;">Ctrl+O</span>
<span class="t" style="left:34.00px;top:97.10px;line-height:16px;font-size:12px;color:#000;letter-spacing:-0.345px;">Недавние файлы</span>
<svg class="abs" style="left:312px;top:99.8px" width="7" height="9" viewBox="0 0 7 9" fill="none" stroke="#333" stroke-width="1.100"><path d="M1.500 1l3.500 3.500L1.500 8"/></svg>
<span class="t" style="left:34.00px;top:118.80px;line-height:16px;font-size:12px;color:#000;letter-spacing:-0.169px;">Открыть из облака</span>
<svg class="abs" style="left:312px;top:121.5px" width="7" height="9" viewBox="0 0 7 9" fill="none" stroke="#333" stroke-width="1.100"><path d="M1.500 1l3.500 3.500L1.500 8"/></svg>
<span class="t" style="left:34.00px;top:148.80px;line-height:16px;font-size:12px;color:#000;letter-spacing:-0.179px;">Сохранить проект</span>
<svg class="abs" style="left:312px;top:151.5px" width="7" height="9" viewBox="0 0 7 9" fill="none" stroke="#333" stroke-width="1.100"><path d="M1.500 1l3.500 3.500L1.500 8"/></svg>
<span class="t" style="left:34.00px;top:170.40px;line-height:16px;font-size:12px;color:#000;letter-spacing:-0.258px;">Сохранить в облаке...</span>
<span class="t" style="left:34.00px;top:192.00px;line-height:16px;font-size:12px;color:#9d9d9d;letter-spacing:-0.170px;">Обновить аудиопревью в облаке</span>
<span class="t" style="left:34.00px;top:222.10px;line-height:16px;font-size:12px;color:#000;letter-spacing:-0.246px;">Экспорт аудио...</span>
<span class="t" style="left:245.50px;top:222.10px;line-height:16px;font-size:12px;color:#000;letter-spacing:-0.058px;">Ctrl+Shift+E</span>
<span class="t" style="left:34.00px;top:243.80px;line-height:16px;font-size:12px;color:#000;letter-spacing:-0.160px;">Экспортировать другое</span>
<svg class="abs" style="left:312px;top:246.5px" width="7" height="9" viewBox="0 0 7 9" fill="none" stroke="#333" stroke-width="1.100"><path d="M1.500 1l3.500 3.500L1.500 8"/></svg>
<span class="t" style="left:34.00px;top:265.40px;line-height:16px;font-size:12px;color:#000;letter-spacing:0.258px;">Импорт</span>
<svg class="abs" style="left:312px;top:268.1px" width="7" height="9" viewBox="0 0 7 9" fill="none" stroke="#333" stroke-width="1.100"><path d="M1.500 1l3.500 3.500L1.500 8"/></svg>
<span class="t" style="left:34.00px;top:287.00px;line-height:16px;font-size:12px;color:#000;letter-spacing:-0.269px;">Поделиться аудио...</span>
<span class="t" style="left:34.00px;top:316.80px;line-height:16px;font-size:12px;color:#000;letter-spacing:-0.104px;">Закрыть проект</span>
<span class="t" style="left:272.00px;top:316.80px;line-height:16px;font-size:12px;color:#000;letter-spacing:0.084px;">Ctrl+W</span>
<span class="t" style="left:34.00px;top:347.30px;line-height:16px;font-size:12px;color:#000;letter-spacing:-0.143px;">Выйти из Audacity</span>
<span class="t" style="left:274.00px;top:347.30px;line-height:16px;font-size:12px;color:#000;letter-spacing:0.083px;">Ctrl+Q</span>
<div class="abs" style="left:6px;top:141.3px;width:320px;height:1px;background:#dcdcdc;"></div>
<div class="abs" style="left:6px;top:214.5px;width:320px;height:1px;background:#dcdcdc;"></div>
<div class="abs" style="left:6px;top:309.5px;width:320px;height:1px;background:#dcdcdc;"></div>
<div class="abs" style="left:6px;top:339.4px;width:320px;height:1px;background:#dcdcdc;"></div>
<div class="abs menu" style="left:329.300px;top:258.500px;width:228.200px;height:91.800px;border-radius:6px;"></div>
<span class="t" style="left:365.50px;top:264.50px;line-height:16px;font-size:12px;color:#000;letter-spacing:-0.044px;">Аудио...</span>
<span class="t" style="left:365.50px;top:286.30px;line-height:16px;font-size:12px;color:#000;letter-spacing:-0.190px;">MIDI...</span>
<span class="t" style="left:365.50px;top:307.50px;line-height:16px;font-size:12px;color:#000;letter-spacing:0.039px;">Меток...</span>
<span class="t" style="left:365.50px;top:329.00px;line-height:16px;font-size:12px;color:#000;letter-spacing:-0.453px;">Raw данных...</span>
<span class="t" style="left:471.00px;top:264.50px;line-height:16px;font-size:12px;color:#000;letter-spacing:0.081px;">Ctrl+Shift+I</span>
<svg class="abs" style="left:0;top:0" width="0" height="0"><defs><filter id="bl" x="-10%" y="-40%" width="120%" height="180%"><feGaussianBlur stdDeviation="1.500"/></filter></defs></svg>
<div class="abs" style="left:101.2px;top:226.7px;width:43.0px;height:43.0px;border-radius:50%;background:rgba(38,38,38,.87);"></div><span class="t numo" style="left:111.9px;top:223.3px;font-size:40px;line-height:50px;clip-path:polygon(-6px -6px,40px -6px,40px 31.05px,17.50px 31.05px,17.50px 60px,6.75px 60px,6.75px 31.05px,-6px 31.05px);">1</span><span class="t num" style="left:111.9px;top:223.3px;font-size:40px;line-height:50px;clip-path:polygon(-6px -6px,40px -6px,40px 32.65px,15.90px 32.65px,15.90px 60px,8.35px 60px,8.35px 32.65px,-6px 32.65px);">1</span>
<svg class="abs" style="left:0;top:0" width="832" height="603" viewBox="0 0 832 603"><rect x="24.80" y="259.60" width="91.30" height="26.90" rx="6.800" fill="none" stroke="#000" stroke-opacity=".55" stroke-width="4.6" filter="url(#bl)" transform="translate(0,1.500)"/><rect x="24.80" y="259.60" width="91.30" height="26.90" rx="6.800" fill="none" stroke="#0c0c0c" stroke-width="3.6"/></svg>
<div class="abs" style="left:327.9px;top:272.8px;width:42px;height:42px;border-radius:50%;background:rgba(38,38,38,.87);"></div><span class="t numo" style="left:338.1px;top:269.5px;font-size:37px;line-height:50px;">2</span><span class="t num" style="left:338.1px;top:269.5px;font-size:37px;line-height:50px;">2</span>
<svg class="abs" style="left:0;top:0" width="832" height="603" viewBox="0 0 832 603"><rect x="359.15" y="259.45" width="184.00" height="27.70" rx="6.800" fill="none" stroke="#000" stroke-opacity=".55" stroke-width="4.7" filter="url(#bl)" transform="translate(0,1.500)"/><rect x="359.15" y="259.45" width="184.00" height="27.70" rx="6.800" fill="none" stroke="#0c0c0c" stroke-width="3.7"/></svg>
</body></html>
